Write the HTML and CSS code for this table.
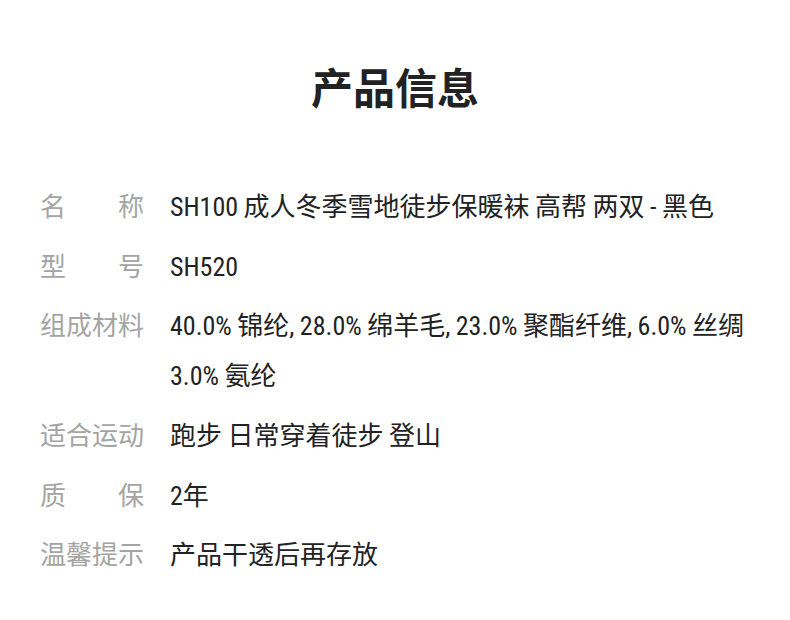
FILE: index.html
```html
<!DOCTYPE html>
<html lang="zh-CN">
<head>
<meta charset="utf-8">
<title>产品信息</title>
<link rel="stylesheet" href="styles.css">
</head>
<body>
<main class="page">
  <h1 class="title">产品信息</h1>
  <dl class="specs">
    <div class="row"><dt class="label">名称</dt><dd class="value">SH100 成人冬季雪地徒步保暖袜 高帮 两双 - 黑色</dd></div>
    <div class="row"><dt class="label">型号</dt><dd class="value">SH520</dd></div>
    <div class="row"><dt class="label">组成材料</dt><dd class="value">40.0% 锦纶, 28.0% 绵羊毛, 23.0% 聚酯纤维, 6.0% 丝绸 3.0% 氨纶</dd></div>
    <div class="row"><dt class="label">适合运动</dt><dd class="value">跑步 日常穿着徒步 登山</dd></div>
    <div class="row"><dt class="label">质保</dt><dd class="value">2年</dd></div>
    <div class="row"><dt class="label">温馨提示</dt><dd class="value">产品干透后再存放</dd></div>
  </dl>
</main>
</body>
</html>
```

FILE: styles.css
```css
html, body {
  margin: 0;
  padding: 0;
  background: #ffffff;
}
.page {
  width: 790px;
  box-sizing: border-box;
  padding: 60px 40px 0 40px;
  font-family: Roboto, "Noto Sans CJK SC", sans-serif;
}
.title {
  margin: 0;
  text-align: center;
  font-size: 42px;
  line-height: 60px;
  font-weight: 700;
  color: #222222;
}
.specs {
  margin: 62px 0 0 0;
  display: flex;
  flex-direction: column;
  gap: 9.7px;
}
.row {
  display: flex;
  gap: 26px;
}
.label {
  flex: 0 0 104px;
  margin: 0;
  font-size: 26px;
  line-height: 50px;
  color: #a4a4a4;
  text-align: justify;
  text-align-last: justify;
}
.value {
  flex: 1;
  margin: 0;
  font-size: 26px;
  line-height: 50px;
  color: #222222;
  font-stretch: 87.5%;
  word-spacing: -0.5px;
}
```
